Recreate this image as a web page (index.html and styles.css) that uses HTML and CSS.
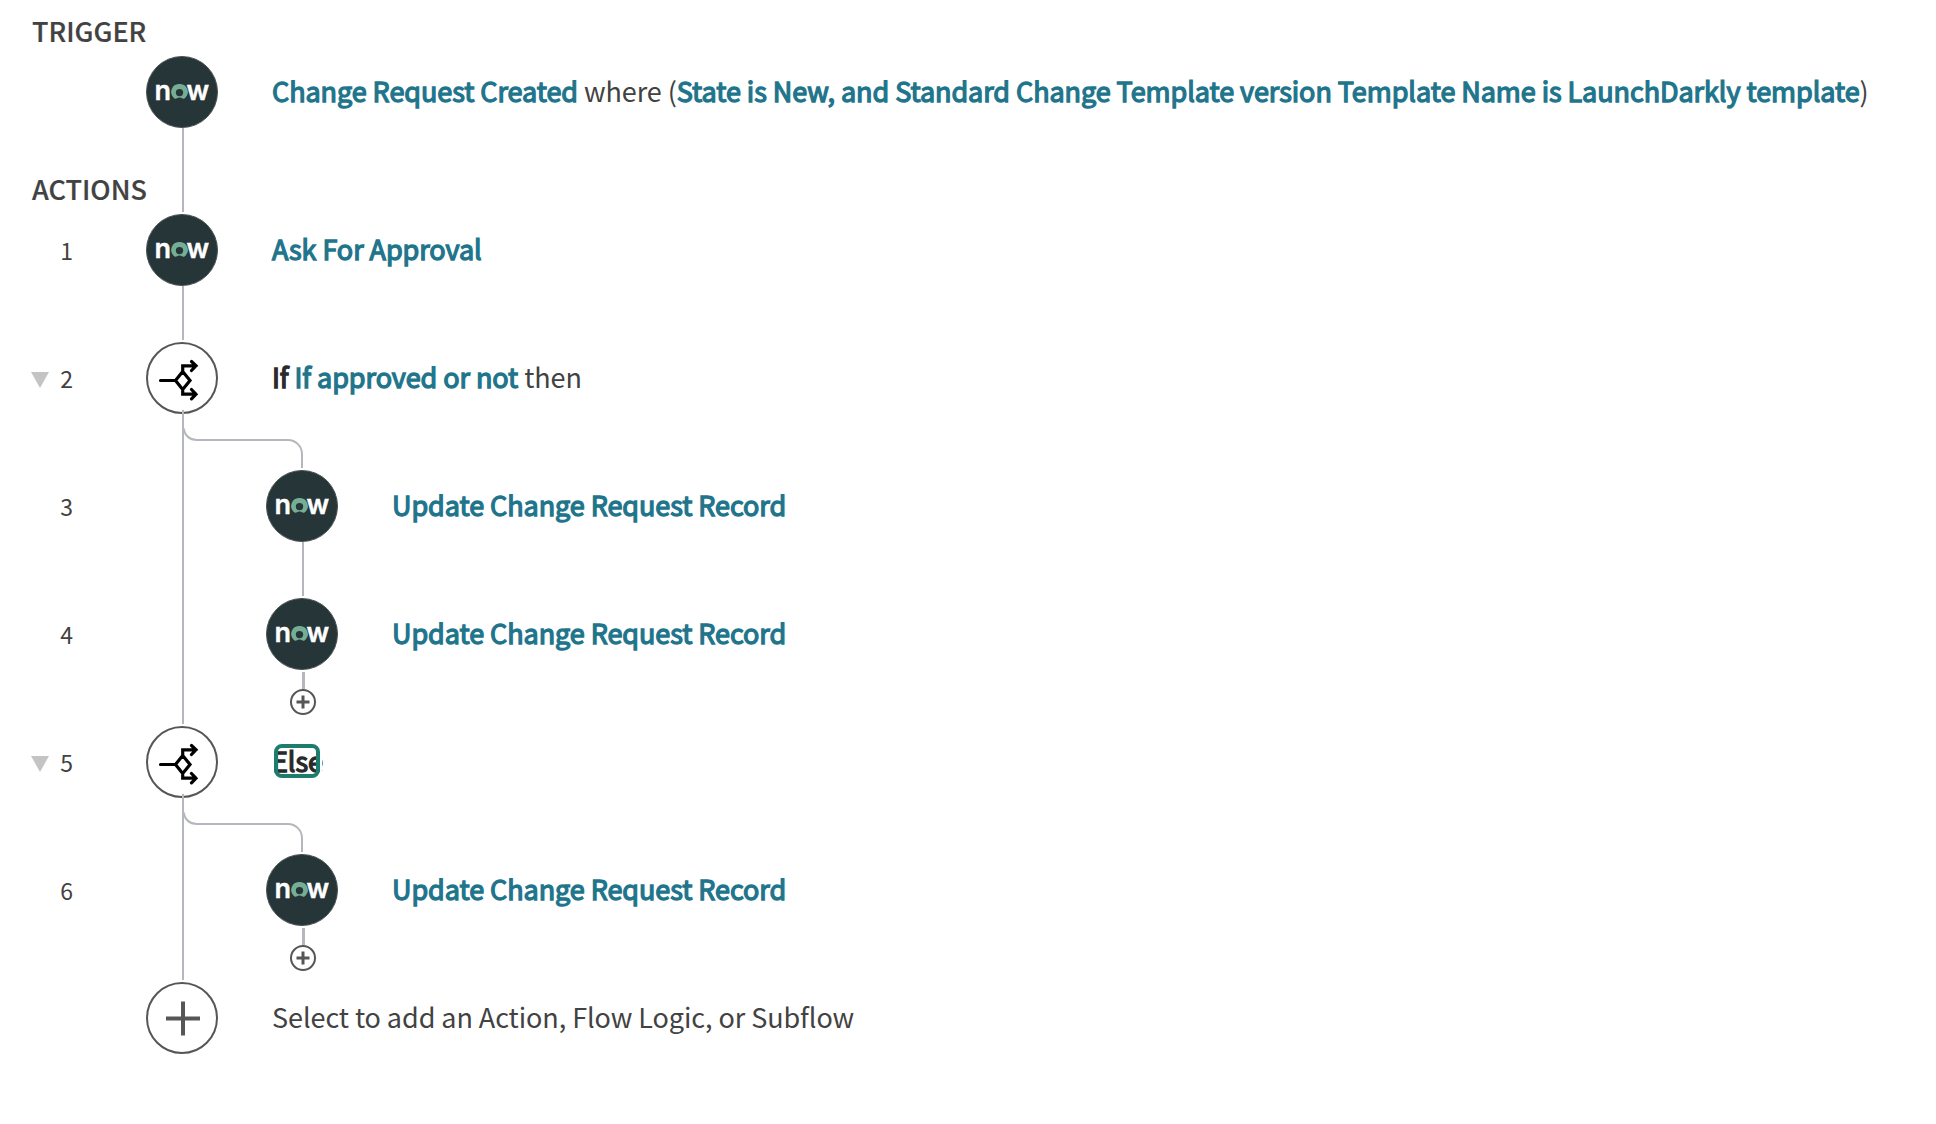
FILE: index.html
```html
<!DOCTYPE html>
<html lang="en">
<head>
<meta charset="utf-8">
<title>Flow</title>
<link rel="stylesheet" href="styles.css">
</head>
<body>
<svg class="defs" aria-hidden="true">
  <symbol id="mark" viewBox="0 0 16 15">
    <path class="mark" d="M8 0a8 8 0 0 0-5.700 13.900c.7.800 1.700 1 2.600.5a6.500 6.500 0 0 1 6.200 0c.9.500 1.900.3 2.600-.5A8 8 0 0 0 8 0zm0 4.900a3.700 3.700 0 1 1 0 7.400a3.700 3.700 0 0 1 0-7.400z"/>
  </symbol>
  <symbol id="logic" viewBox="0 0 72 72">
    <circle class="ring" cx="36" cy="36" r="35"/>
    <path class="branch" d="M14.500 38.500H29M36.700 29.500L44 38.500L36.700 47.500L29.500 38.500ZM36.700 29.500V23.800H50M36.700 47.500V52.200H50M45.500 19.500L50 23.800L45.500 28.500M45.500 47.500L50 52.200L45.500 56.800"/>
  </symbol>
  <symbol id="add" viewBox="0 0 72 72">
    <circle class="ring" cx="36" cy="36" r="35"/>
    <path class="plus" d="M20 36.500H54M37 19.500V53.500"/>
  </symbol>
  <symbol id="add-small" viewBox="0 0 26 26">
    <circle class="ring" cx="13" cy="13" r="12"/>
    <path class="plus-small" d="M6.500 13H19.500M13 6.500V19.500"/>
  </symbol>
  <symbol id="elbow" viewBox="0 0 122 40">
    <path class="elbow-line" d="M1 -2Q3 12 15 12H106A14 14 0 0 1 120 26V40"/>
  </symbol>
</svg>
<main class="flow">
  <section>
    <h2 class="heading">TRIGGER</h2>
    <div class="row row-trigger">
      <div class="gutter"></div>
      <div class="rail"><div class="node now"><span>n</span><svg class="o"><use href="#mark"/></svg><span>w</span></div><i class="line"></i></div>
      <p class="label"><b>Change Request Created</b> where (<b>State is New, and Standard Change Template version Template Name is LaunchDarkly template</b>)</p>
    </div>
  </section>
  <section class="actions">
    <h2 class="heading">ACTIONS</h2>
    <div class="row">
      <div class="gutter"><span class="num">1</span></div>
      <div class="rail"><div class="node now"><span>n</span><svg class="o"><use href="#mark"/></svg><span>w</span></div><i class="line"></i></div>
      <p class="label"><b>Ask For Approval</b></p>
    </div>
    <div class="row">
      <div class="gutter"><i class="toggle"></i><span class="num">2</span></div>
      <div class="rail"><svg class="node"><use href="#logic"/></svg><i class="line line-through"></i><svg class="elbow"><use href="#elbow"/></svg></div>
      <p class="label"><b class="key">If</b> <b>If approved or not</b> then</p>
    </div>
    <div class="row nested">
      <div class="gutter"><span class="num">3</span></div>
      <div class="rail"><i class="line"></i></div>
      <div class="rail"><div class="node now"><span>n</span><svg class="o"><use href="#mark"/></svg><span>w</span></div><i class="line"></i></div>
      <p class="label"><b>Update Change Request Record</b></p>
    </div>
    <div class="row nested">
      <div class="gutter"><span class="num">4</span></div>
      <div class="rail"><i class="line line-end"></i></div>
      <div class="rail"><div class="node now"><span>n</span><svg class="o"><use href="#mark"/></svg><span>w</span></div><i class="line line-stub"></i><svg class="add-small"><use href="#add-small"/></svg></div>
      <p class="label"><b>Update Change Request Record</b></p>
    </div>
    <div class="row">
      <div class="gutter"><i class="toggle"></i><span class="num">5</span></div>
      <div class="rail"><svg class="node"><use href="#logic"/></svg><i class="line line-through"></i><svg class="elbow"><use href="#elbow"/></svg></div>
      <p class="label"><b class="key focused">Else</b></p>
    </div>
    <div class="row nested">
      <div class="gutter"><span class="num">6</span></div>
      <div class="rail"><i class="line line-end"></i></div>
      <div class="rail"><div class="node now"><span>n</span><svg class="o"><use href="#mark"/></svg><span>w</span></div><i class="line line-stub"></i><svg class="add-small"><use href="#add-small"/></svg></div>
      <p class="label"><b>Update Change Request Record</b></p>
    </div>
    <div class="row row-last">
      <div class="gutter"></div>
      <div class="rail"><svg class="node"><use href="#add"/></svg></div>
      <p class="label">Select to add an Action, Flow Logic, or Subflow</p>
    </div>
  </section>
</main>
</body>
</html>
```
FILE: styles.css
```css
*, *::after { box-sizing: border-box; }
body {
  margin: 0;
  background: #fff;
  color: #424242;
  font-family: "Noto Sans CJK SC", "Open Sans", sans-serif;
  font-size: 27px;
}
.defs { position: absolute; width: 0; height: 0; }
.flow { display: flex; flex-direction: column; }
.heading {
  margin: 0;
  padding-left: 32px;
  height: 56px;
  line-height: 62px;
  font-size: 27px;
  font-weight: 500;
  -webkit-text-stroke: .2px currentColor;
}
.row {
  display: grid;
  grid-template-columns: 146px 72px 1fr;
  height: 128px;
}
.row-trigger { height: 102px; }
.row-last { height: 72px; }
.nested { grid-template-columns: 146px 72px 72px 1fr; }
.nested .rail + .rail { margin-left: 48px; margin-right: -48px; }
.nested .label { padding-left: 102px; }

.gutter {
  display: flex;
  align-items: center;
  justify-content: flex-end;
  height: 72px;
  padding: 2px 73px 0 0;
  gap: 11px;
  font-size: 23px;
}
.num { line-height: 1; margin-top: -2px; }
.toggle {
  margin-top: 2px;
  border: solid transparent;
  border-width: 16px 9.500px 0;
  border-top-color: #c4c4c4;
}

.rail {
  position: relative;
  display: flex;
  flex-direction: column;
  height: 128px;
}
.node { display: block; flex: none; width: 72px; height: 72px; }
.now {
  display: flex;
  align-items: flex-start;
  padding: 17.300px 0 0 7.500px;
  border: 1px solid #4c5254;
  border-radius: 50%;
  background: #253538;
  color: #fff;
  font: 600 27px/34px Inter, sans-serif;
  -webkit-text-stroke: .4px #fff;
}
.o { flex: none; width: 17px; height: 15px; margin: 9.700px -1px 0 -.5px; }
.mark { fill: #75ae95; fill-rule: evenodd; }
.line {
  flex: 1;
  width: 2px;
  margin: 0 0 2px 36px;
  background: #b4b8bc;
}
.row-trigger .rail { height: 158px; }
.line-through { margin-top: -4px; margin-bottom: 0; z-index: 1; }
.nested .rail:nth-child(2) .line { margin-bottom: 0; }
.nested .rail:nth-child(2) .line-end { margin-bottom: 2px; }
.line-stub { flex: none; width: 3px; height: 17px; margin: 2px 0 0 36px; }
.elbow { position: absolute; left: 36px; top: 86px; width: 122px; height: 40px; }
.add-small { display: block; flex: none; width: 26px; height: 26px; margin-left: 23.500px; }

.ring { fill: #fff; stroke: #565656; stroke-width: 2; }
.branch { fill: none; stroke: #000; stroke-width: 3.200; stroke-linecap: round; stroke-linejoin: miter; }
.plus { stroke: #565656; stroke-width: 4; }
.plus-small { stroke: #565656; stroke-width: 3; }
.elbow-line { fill: none; stroke: #b4b8bc; stroke-width: 2; }

.label {
  margin: 0;
  padding-left: 54px;
  line-height: 70px;
  height: 72px;
  letter-spacing: -.07px;
  white-space: nowrap;
}
b { font-weight: 400; color: #1f758c; -webkit-text-stroke: 1.300px currentColor; }
.key { color: #2a2a2a; }
.focused { position: relative; }
.focused::after {
  content: "";
  position: absolute;
  left: 2px;
  top: 3px;
  width: 46px;
  height: 34px;
  border: 4px solid #1d7c6c;
  border-radius: 8px;
  box-shadow: 0 0 0 2px #fff;
}
```
